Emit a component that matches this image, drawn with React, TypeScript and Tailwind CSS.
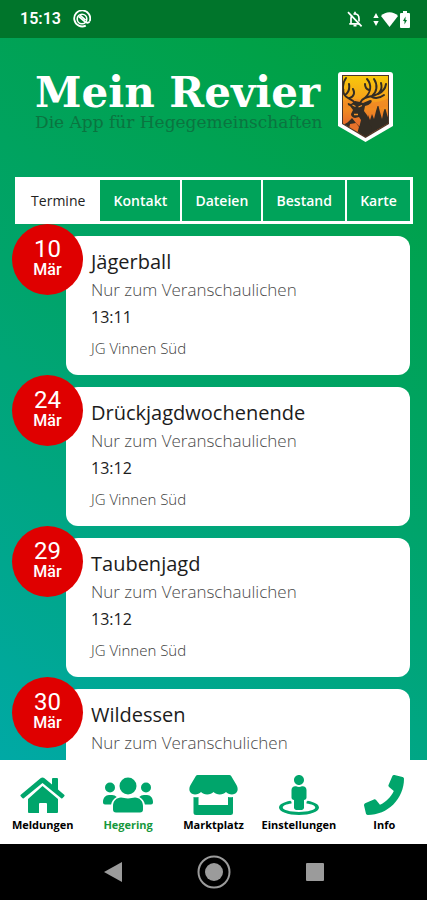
import { useState } from "react";
import type { ComponentType } from "react";
import { FaPhone, FaStreetView } from "react-icons/fa";

type Appointment = {
  day: string;
  month: string;
  title: string;
  note: string;
  time: string;
  group: string;
};

type IconProps = { className?: string };

const appointments: Appointment[] = [
  { day: "10", month: "Mär", title: "Jägerball", note: "Nur zum Veranschaulichen", time: "13:11", group: "JG Vinnen Süd" },
  { day: "24", month: "Mär", title: "Drückjagdwochenende", note: "Nur zum Veranschaulichen", time: "13:12", group: "JG Vinnen Süd" },
  { day: "29", month: "Mär", title: "Taubenjagd", note: "Nur zum Veranschaulichen", time: "13:12", group: "JG Vinnen Süd" },
  { day: "30", month: "Mär", title: "Wildessen", note: "Nur zum Veranschulichen", time: "13:12", group: "JG Vinnen Süd" },
];

const tabs = ["Termine", "Kontakt", "Dateien", "Bestand", "Karte"];

function HouseIcon({ className }: IconProps) {
  return (
    <svg className={className} viewBox="0 0 45 36" fill="currentColor" aria-hidden="true">
      <path d="M22.500 9L38 22v13q0 1-1 1H27v-9q0-1-1-1h-6q-1 0-1 1v9H9q-1 0-1-1V22z" />
      <path d="M20.500 1.300q2-1.600 4 0L32 7.500V2q0-1 1-1h4q1 0 1 1v10.500l6.200 5.200q.8.700.1 1.500l-1.600 1.900q-.7.700-1.500.1L22.500 6 3.800 21.200q-.8.600-1.500-.1L.7 19.200Q0 18.400.8 17.700z" />
    </svg>
  );
}

function GroupIcon({ className }: IconProps) {
  return (
    <svg className={className} viewBox="0 0 50 36" fill="currentColor" aria-hidden="true">
      <circle cx="25" cy="9" r="8.500" />
      <circle cx="7" cy="10.500" r="5" />
      <circle cx="43" cy="10.500" r="5" />
      <path d="M10 32.500v-3.500c0-5 3.500-8.500 8-8.500 2.500 0 4 1 7 1s4.500-1 7-1c4.500 0 8 3.500 8 8.500v3.500q0 3-3 3H13q-3 0-3-3z" />
      <path d="M0 25c0-4 2.500-7 6-7h3c2 0 3.500.7 4.700 2-3.200 1.700-5 4.500-5.600 7.500H2q-2 0-2-2zM50 25c0-4-2.500-7-6-7h-3c-2 0-3.500.7-4.700 2 3.200 1.700 5 4.500 5.600 7.500H48q2 0 2-2z" />
    </svg>
  );
}

function ShopIcon({ className }: IconProps) {
  return (
    <svg className={className} viewBox="0 0 49 40" fill="currentColor" aria-hidden="true">
      <path d="M7 .8Q7.600 0 8.600 0h31.800q1 0 1.600.8L47.500 10c2.800 5 .2 9.500-4.500 9.500-2.600 0-4.600-1-6-2.500-1.500 1.600-3.600 2.500-6.200 2.500s-4.800-.9-6.300-2.500c-1.500 1.600-3.600 2.500-6.300 2.500s-4.700-.9-6.200-2.500c-1.400 1.500-3.400 2.500-6 2.500-4.700 0-7.300-4.500-4.500-9.500z" />
      <path d="M4.500 22q2.600.6 5-.1V30H39v-8.100q2.400.7 5 .1v15.500q0 2.500-2.500 2.500H7q-2.500 0-2.500-2.500z" />
    </svg>
  );
}

const navItems: { label: string; icon: ComponentType<IconProps>; size: string }[] = [
  { label: "Meldungen", icon: HouseIcon, size: "h-9 w-[45px]" },
  { label: "Hegering", icon: GroupIcon, size: "h-9 w-[50px]" },
  { label: "Marktplatz", icon: ShopIcon, size: "h-10 w-[49px]" },
  { label: "Einstellungen", icon: FaStreetView, size: "size-10" },
  { label: "Info", icon: FaPhone, size: "size-10" },
];

function StatusBar() {
  return (
    <div className="flex h-[38px] shrink-0 items-center justify-between bg-[#00752b] pr-[17px] pl-5 text-white">
      <div className="flex items-center gap-3">
        <span className="font-[Roboto,sans-serif] text-base font-semibold">15:13</span>
        <svg className="size-[18px]" viewBox="0 0 18 18" fill="none" stroke="currentColor" aria-hidden="true">
          <path d="M12.800 15.600A8 8 0 1 1 16.800 11" strokeWidth="1.800" />
          <path d="M16.600 11.200c-.6 2-3.200 2-4 .3" strokeWidth="1.800" />
          <circle cx="9" cy="9" r="4.800" strokeWidth="1.600" />
          <path d="M5.600 6.400l7 6M7 5.200l5.600 5" strokeWidth="1.600" />
        </svg>
      </div>
      <div className="flex items-center">
        <svg className="mr-2.5 h-[18px] w-4" viewBox="0 0 16 18" fill="none" stroke="currentColor" strokeWidth="1.700" aria-hidden="true">
          <path d="M4 13.500V8.500c0-1.200.4-2.300 1.100-3.100M6.500 4.200C7 4 7.500 3.800 8 3.800c2.300 0 4 2 4 4.600v3" />
          <path d="M8 1.800v2M2.300 13.800h10" />
          <path d="M6.500 15.500h3" strokeWidth="2" />
          <path d="M1 2.200L14.600 16.400" />
        </svg>
        <svg className="h-[13px] w-1.5" viewBox="0 0 6 13" fill="currentColor" aria-hidden="true">
          <path d="M3 0l2.700 5H.3zM3 13l2.700-5H.3z" />
        </svg>
        <svg className="mx-0.5 h-[15px] w-[17px]" viewBox="0 0 17 15" fill="currentColor" aria-hidden="true">
          <path d="M8.500 15L0 4C2.300 1.600 5.300.3 8.500.3S14.700 1.600 17 4z" />
        </svg>
        <svg className="h-[17px] w-2.5" viewBox="0 0 10 17" fill="currentColor" fillRule="evenodd" aria-hidden="true">
          <path d="M3 0h4v2h2a1 1 0 0 1 1 1v13a1 1 0 0 1-1 1H1a1 1 0 0 1-1-1V3a1 1 0 0 1 1-1h2zM5.500 5.500L3 10h1.500v3.500L7 9H5.500z" />
        </svg>
      </div>
    </div>
  );
}

function DeerBadge() {
  return (
    <svg className="h-[70px] w-[55px] shrink-0" viewBox="0 0 55 70" aria-hidden="true">
      <defs>
        <linearGradient id="sunset" x1="0" y1="0" x2="0" y2="1">
          <stop offset="0" stopColor="#f8c80a" />
          <stop offset="0.4" stopColor="#f6a01c" />
          <stop offset="0.75" stopColor="#e8702a" />
        </linearGradient>
        <clipPath id="shield">
          <path d="M5 4h45v47.500L27.500 64.500 5 51.500z" />
        </clipPath>
      </defs>
      <path d="M3 0h49q3 0 3 3v51L27.500 70 0 54V3q0-3 3-3z" fill="#fff" />
      <path d="M4 3h47v49L27.500 66 4 52z" fill="#493428" />
      <path d="M5 4h45v47.500L27.500 64.500 5 51.500z" fill="url(#sunset)" />
      <g clipPath="url(#shield)">
        <path d="M4 29q12-4 22 0t25-3v8q-14 4-24 1t-23 2z" fill="#ee8426" opacity="0.6" />
        <path d="M28 66V48l2-5 2 5 2-6 2 5 2-8 1.500-5h1l1.500 6 2 7 1.500-7 1-3h1l2 7 2 5v20z" fill="#332d24" />
        <path d="M4 53q5-1 10-7l4 5 3 3 9 4v10H4z" fill="#332d24" />
        <path d="M13 32l4-3 5 1 3 1 7-3q3 0 1 3-3 3-6 3l-1 5 3 4 2 8 3 5-3 10-9-2-1-8 2-8-2-3-4 1q-4-1-4-4l2-4-3-4q-3-1-2-3z" fill="#332d24" />
        <path d="M14.500 33l3 1.500M20.500 35l3.500-1.500M16 42.500h4" stroke="#f2952a" strokeWidth="1.300" />
        <path d="M12 52l6-1 3 4-2 7-8-5z" fill="#e8722a" />
        <g fill="none" stroke="#332d24" strokeLinecap="round" strokeWidth="2">
          <path d="M17 31C15 27 8 27 6 22 4 17 5 10 8 6M7 23c3-2 5-5 4-11M12 26c4-2 5-5 3-9M5.500 18C3 16 4 13 3 11" />
          <path d="M22 31c2-5 7-6 12-7 7-1 11-6 9-13M27 26c6-6 7-13 2-19M31 18c-3-1-4-3-4-6M34 24c5-4 6-11 2-17M40 22c2-1 7-3 8-10M34 25c4 2 8 1 12-2" />
        </g>
      </g>
    </svg>
  );
}

function AppHeader() {
  return (
    <header className="flex shrink-0 justify-between pt-[34px] pr-[34px] pb-[35px] pl-[35px]">
      <div className="whitespace-nowrap font-['DejaVu_Serif',serif]">
        <h1 className="text-[42px] leading-[42px] font-bold text-white">Mein Revier</h1>
        <p className="text-[17px] leading-4 text-[#0b7440]">Die App für Hegegemeinschaften</p>
      </div>
      <DeerBadge />
    </header>
  );
}

function AppointmentCard({ item }: { item: Appointment }) {
  return (
    <li className="relative ml-[54px] h-[139px] shrink-0 rounded-xl bg-white pt-3 pl-[25px]">
      <div className="absolute -top-3 -left-[54px] flex size-[71px] flex-col items-center rounded-full bg-[#df0000] pt-[13px] font-[Roboto,sans-serif] text-white">
        <span className="text-2xl leading-6">{item.day}</span>
        <span className="text-base leading-[18px] font-medium">{item.month}</span>
      </div>
      <h2 className="text-xl leading-7 text-[#1c1c1c]">{item.title}</h2>
      <p className="text-[17px] leading-7 font-light text-[#4a4a4a]">{item.note}</p>
      <p className="text-base leading-[26px] text-[#1c1c1c]">{item.time}</p>
      <p className="mt-1 text-[15px] leading-7 font-light text-[#3c3c3c]">{item.group}</p>
    </li>
  );
}

export default function App() {
  const [tab, setTab] = useState("Termine");
  const [page, setPage] = useState("Hegering");

  return (
    <div className="flex h-screen flex-col overflow-hidden bg-black font-['Open_Sans',sans-serif]">
      <StatusBar />
      <div className="flex min-h-0 flex-1 flex-col bg-linear-[213deg] from-[#00a03c] via-[#00a46b] to-[#00a9a5]">
        <AppHeader />
        <div role="tablist" className="mr-[14px] ml-[15px] flex h-[47px] shrink-0 divide-x-2 divide-white border-[3px] border-white">
          {tabs.map((name) => (
            <button
              key={name}
              type="button"
              role="tab"
              aria-selected={tab === name}
              onClick={() => setTab(name)}
              className={`flex-auto cursor-pointer text-sm ${tab === name ? "bg-white text-[#222]" : "bg-[#00a35a] font-semibold text-white"}`}
            >
              {name}
            </button>
          ))}
        </div>
        <ul className="flex min-h-0 flex-1 flex-col gap-3 overflow-hidden pt-3 pr-[17px] pl-3">
          {appointments.map((item) => (
            <AppointmentCard key={item.day} item={item} />
          ))}
        </ul>
      </div>
      <nav className="grid h-[84px] shrink-0 grid-cols-5 bg-white">
        {navItems.map(({ label, icon: Icon, size }) => (
          <button
            key={label}
            type="button"
            onClick={() => setPage(label)}
            className="flex cursor-pointer flex-col items-center pt-[10px]"
          >
            <span className="flex h-[50px] items-center justify-center">
              <Icon className={`text-[#00a56b] ${size}`} />
            </span>
            <span className={`text-[11px] leading-[10px] font-bold ${page === label ? "text-[#16983c]" : "text-black"}`}>{label}</span>
          </button>
        ))}
      </nav>
      <div className="flex h-14 shrink-0 items-center justify-center gap-[75px] bg-black text-[#9b9b9b]">
        <button type="button" aria-label="Zurück" className="cursor-pointer">
          <svg className="h-5 w-[18px]" viewBox="0 0 18 20" fill="currentColor">
            <path d="M18 0v20L0 10z" />
          </svg>
        </button>
        <button type="button" aria-label="Startseite" className="cursor-pointer">
          <svg className="size-[34px]" viewBox="0 0 34 34" fill="currentColor">
            <circle cx="17" cy="17" r="9" />
            <circle cx="17" cy="17" r="15.500" fill="none" stroke="currentColor" strokeWidth="2" />
          </svg>
        </button>
        <button type="button" aria-label="Übersicht" className="cursor-pointer">
          <svg className="size-[18px]" viewBox="0 0 18 18" fill="currentColor">
            <rect width="18" height="18" rx="1" />
          </svg>
        </button>
      </div>
    </div>
  );
}
